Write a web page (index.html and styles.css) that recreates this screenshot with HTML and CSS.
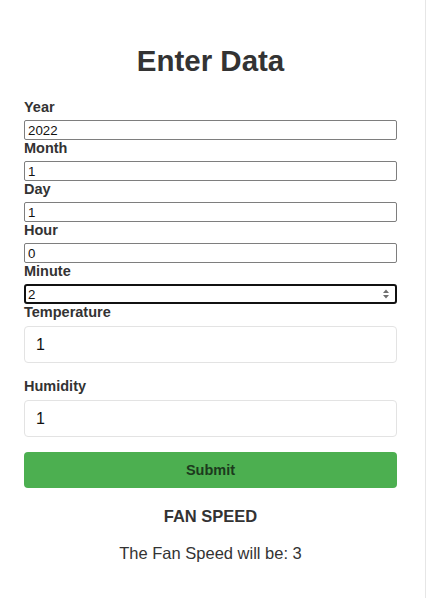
FILE: index.html
```html
<!DOCTYPE html>
<html lang="en">
<head>
<meta charset="utf-8">
<title>Enter Data</title>
<link rel="stylesheet" href="styles.css">
</head>
<body>
<div class="page">
  <form class="card">
    <h1 class="title">Enter Data</h1>
    <label class="lbl">Year</label>
    <input class="basic" type="text" value="2022">
    <label class="lbl">Month</label>
    <input class="basic" type="text" value="1">
    <label class="lbl">Day</label>
    <input class="basic" type="text" value="1">
    <label class="lbl">Hour</label>
    <input class="basic" type="text" value="0">
    <label class="lbl">Minute</label>
    <div class="numwrap">
      <input class="basic focused" type="text" value="2">
      <svg class="spin" width="8" height="12" viewBox="0 0 8 12"><path d="M4 1.5 L7 5 H1 Z M4 10.5 L1 7 H7 Z" fill="#6f6f6f"/></svg>
    </div>
    <label class="lbl">Temperature</label>
    <input class="fancy" type="text" value="1">
    <label class="lbl">Humidity</label>
    <input class="fancy" type="text" value="1">
    <button class="submit" type="button">Submit</button>
    <h3 class="result-title">FAN SPEED</h3>
    <p class="result">The Fan Speed will be: 3</p>
  </form>
</div>
</body>
</html>
```

FILE: styles.css
```css
* { box-sizing: border-box; }
html, body { margin: 0; padding: 0; background: #ffffff; }
body { font-family: "Liberation Sans", Arial, sans-serif; color: #333333; }

.page {
  width: 426px;
  height: 598px;
  border-right: 1px solid #e6e6e6;
}

.card {
  display: flex;
  flex-direction: column;
  padding: 44px 28px 0 24px;
}

.title {
  margin: 0 0 21px 0;
  font-size: 29.5px;
  line-height: 34px;
  font-weight: 700;
  text-align: center;
  color: #333333;
}

.lbl {
  display: block;
  font-size: 14.5px;
  line-height: 17px;
  font-weight: 700;
  color: #333333;
  margin-bottom: 4px;
}

.basic {
  display: block;
  width: 100%;
  height: 20px;
  margin: 0;
  padding: 0 3px;
  border: 1px solid #7e7e7e;
  border-radius: 2px;
  font-family: "Liberation Sans", Arial, sans-serif;
  font-size: 13.3px;
  color: #111111;
  background: #ffffff;
  outline: none;
}

.numwrap { position: relative; }

.basic.focused {
  border: 2px solid #111111;
  border-radius: 3px;
  padding-left: 2px;
}

.spin {
  position: absolute;
  right: 7px;
  top: 4px;
}

.fancy {
  display: block;
  width: 100%;
  height: 37px;
  margin: 1px 0 15px 0;
  padding: 0 11px;
  border: 1px solid #e3e3e3;
  border-radius: 4px;
  font-family: "Liberation Sans", Arial, sans-serif;
  font-size: 16px;
  color: #111111;
  background: #ffffff;
  outline: none;
}

.submit {
  display: block;
  width: 100%;
  height: 36px;
  margin: 0;
  border: none;
  border-radius: 4px;
  background: #4caf50;
  color: #1c3a1d;
  font-family: "Liberation Sans", Arial, sans-serif;
  font-size: 14.5px;
  font-weight: 700;
}

.result-title {
  margin: 19px 0 0 0;
  font-size: 16.5px;
  line-height: 19px;
  font-weight: 700;
  text-align: center;
  color: #333333;
}

.result {
  margin: 18px 0 0 0;
  font-size: 16.5px;
  line-height: 19px;
  text-align: center;
  color: #333333;
}
```
